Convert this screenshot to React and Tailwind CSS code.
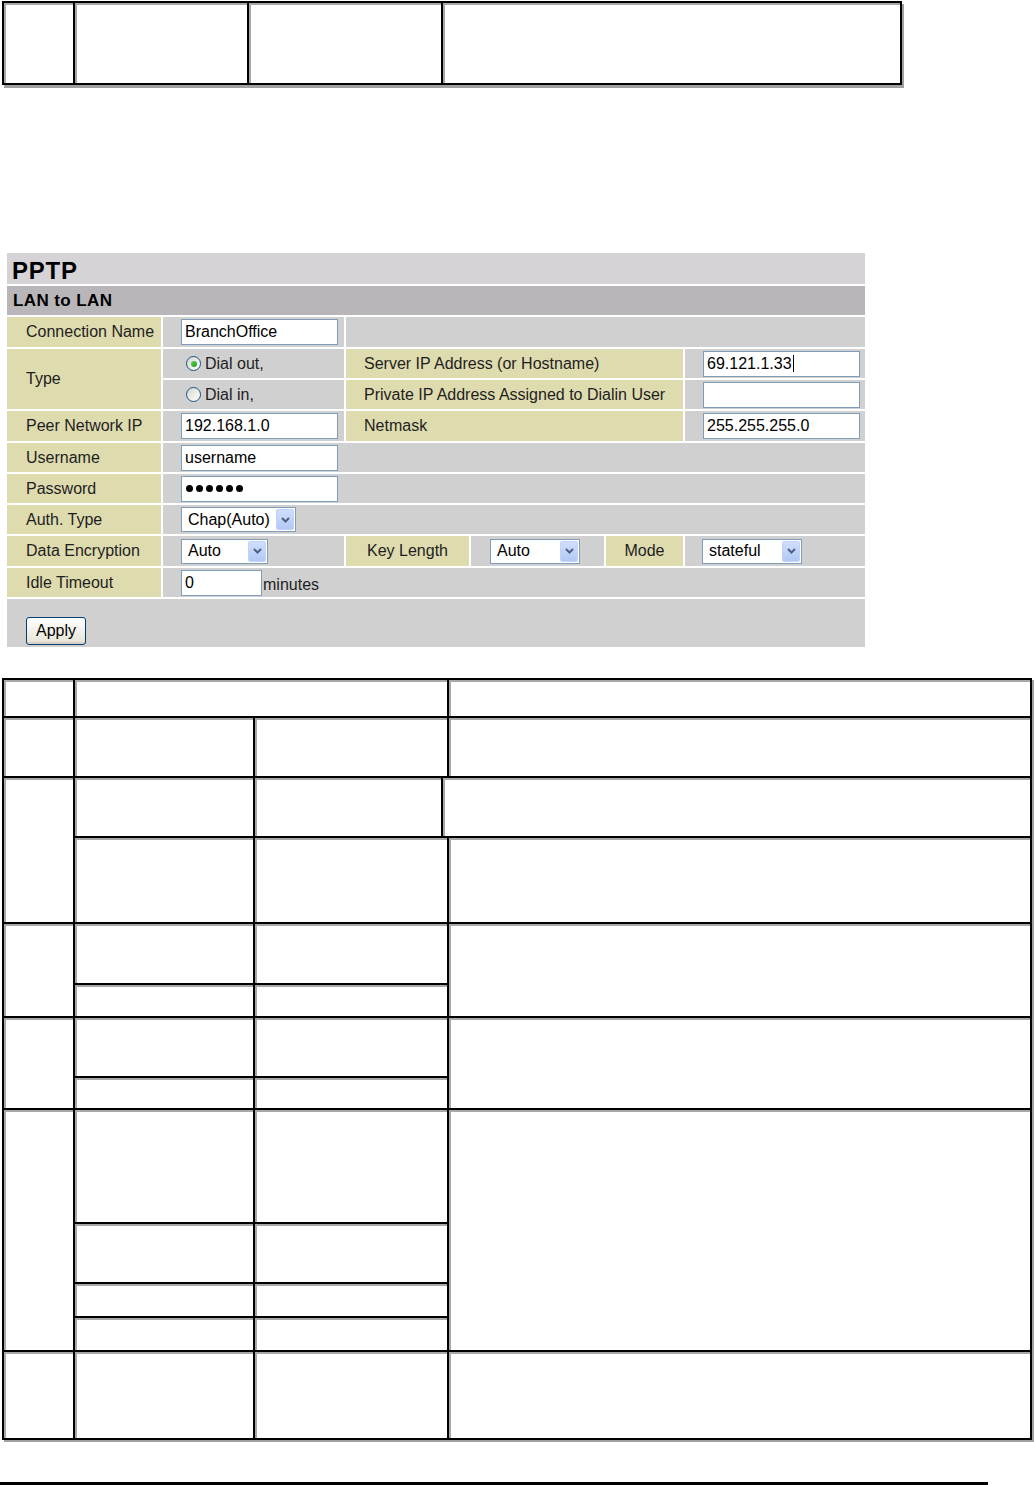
import React from "react";

const cell = "bg-white shadow-[inset_2px_2px_0_#a8a8a8]";

function TopTable() {
  return (
    <div className="ml-[2px] mt-[1px] grid w-[900px] grid-cols-[69px_172px_192px_457px] grid-rows-[80px] gap-[2px] bg-black p-[2px] shadow-[2px_3px_0_#a0a0a0]">
      <div className={cell} />
      <div className={cell} />
      <div className={cell} />
      <div className={cell} />
    </div>
  );
}

function BottomTable() {
  return (
    <div className="ml-[2px] mt-[31px] grid w-[1030px] grid-cols-[69px_178px_186px_4px_581px] grid-rows-[36px_58px_58px_84px_59px_31px_58px_30px_112px_58px_32px_32px_86px] gap-[2px] bg-black p-[2px] shadow-[2px_2px_0_#a0a0a0]">
      {/* row 1 */}
      <div className={`${cell} col-start-1 row-start-1`} />
      <div className={`${cell} col-start-2 col-span-3 row-start-1`} />
      <div className={`${cell} col-start-5 row-start-1`} />
      {/* row 2 */}
      <div className={`${cell} col-start-1 row-start-2`} />
      <div className={`${cell} col-start-2 row-start-2`} />
      <div className={`${cell} col-start-3 col-span-2 row-start-2`} />
      <div className={`${cell} col-start-5 row-start-2`} />
      {/* rows 3-4 */}
      <div className={`${cell} col-start-1 row-start-3 row-span-2`} />
      <div className={`${cell} col-start-2 row-start-3`} />
      <div className={`${cell} col-start-3 row-start-3`} />
      <div className={`${cell} col-start-4 col-span-2 row-start-3`} />
      <div className={`${cell} col-start-2 row-start-4`} />
      <div className={`${cell} col-start-3 col-span-2 row-start-4`} />
      <div className={`${cell} col-start-5 row-start-4`} />
      {/* rows 5-6 */}
      <div className={`${cell} col-start-1 row-start-5 row-span-2`} />
      <div className={`${cell} col-start-2 row-start-5`} />
      <div className={`${cell} col-start-3 col-span-2 row-start-5`} />
      <div className={`${cell} col-start-2 row-start-6`} />
      <div className={`${cell} col-start-3 col-span-2 row-start-6`} />
      <div className={`${cell} col-start-5 row-start-5 row-span-2`} />
      {/* rows 7-8 */}
      <div className={`${cell} col-start-1 row-start-7 row-span-2`} />
      <div className={`${cell} col-start-2 row-start-7`} />
      <div className={`${cell} col-start-3 col-span-2 row-start-7`} />
      <div className={`${cell} col-start-2 row-start-8`} />
      <div className={`${cell} col-start-3 col-span-2 row-start-8`} />
      <div className={`${cell} col-start-5 row-start-7 row-span-2`} />
      {/* rows 9-12 */}
      <div className={`${cell} col-start-1 row-start-9 row-span-4`} />
      <div className={`${cell} col-start-2 row-start-9`} />
      <div className={`${cell} col-start-3 col-span-2 row-start-9`} />
      <div className={`${cell} col-start-2 row-start-10`} />
      <div className={`${cell} col-start-3 col-span-2 row-start-10`} />
      <div className={`${cell} col-start-2 row-start-11`} />
      <div className={`${cell} col-start-3 col-span-2 row-start-11`} />
      <div className={`${cell} col-start-2 row-start-12`} />
      <div className={`${cell} col-start-3 col-span-2 row-start-12`} />
      <div className={`${cell} col-start-5 row-start-9 row-span-4`} />
      {/* row 13 */}
      <div className={`${cell} col-start-1 row-start-13`} />
      <div className={`${cell} col-start-2 row-start-13`} />
      <div className={`${cell} col-start-3 col-span-2 row-start-13`} />
      <div className={`${cell} col-start-5 row-start-13`} />
    </div>
  );
}

function Radio({ checked }) {
  return (
    <span className="flex h-[15px] w-[15px] items-center justify-center rounded-full border border-[#1c5180] bg-gradient-to-br from-[#d6d6cf] to-white">
      {checked && (
        <span className="h-[6px] w-[6px] rounded-full bg-gradient-to-br from-[#55d555] to-[#1e9a1e]" />
      )}
    </span>
  );
}

function Chevron() {
  return (
    <svg width="9" height="6" viewBox="0 0 9 6">
      <path d="M1 1 L4.5 4.5 L8 1" fill="none" stroke="#4d6185" strokeWidth="2" />
    </svg>
  );
}

function Select({ className, text }) {
  return (
    <div className={`flex h-[25px] items-center border border-[#7f9db9] bg-white pr-[1px] ${className}`}>
      <span className="pl-[6px] text-[16px] text-black">{text}</span>
      <span className="ml-auto flex h-[21px] w-[18px] items-center justify-center rounded-[2px] border border-[#c3d3f5] bg-gradient-to-b from-[#d0defb] to-[#b2c8f6]">
        <Chevron />
      </span>
    </div>
  );
}

function Input({ className, children }) {
  return (
    <div className={`flex h-[26px] items-center border border-[#7f9db9] bg-white pl-[3px] text-[16px] text-black ${className}`}>
      {children}
    </div>
  );
}

const label = "flex items-center bg-[#dedbaf] pl-[19px] text-[16px] text-[#1e1e1e]";
const labelR = "flex items-center bg-[#dedbaf] pl-[18px] text-[16px] text-[#1e1e1e]";
const val = "flex items-center bg-[#d0d0d0] pl-[18px]";

function Form() {
  return (
    <div className="ml-[7px] mt-[168px] grid w-[858px] grid-cols-[154px_181px_123px_133px_77px_180px] grid-rows-[31px_29px_30px_29px_29px_30px_29px_29px_29px_30px_29px_48px] gap-[2px] bg-white">
      <div className="col-span-6 flex items-center bg-[#d6d3d6] pl-[5px] pt-[4px] text-[24px] font-bold tracking-[0.8px] text-black">
        PPTP
      </div>
      <div className="col-span-6 flex items-center bg-[#b9b6b9] pl-[6px] text-[17px] font-bold tracking-[0.4px] text-black">
        LAN to LAN
      </div>

      <div className={label}>Connection Name</div>
      <div className={val}>
        <Input className="w-[157px]">BranchOffice</Input>
      </div>
      <div className="col-span-4 bg-[#d0d0d0]" />

      <div className={`${label} row-span-2`}>Type</div>
      <div className="flex items-center gap-[4px] bg-[#d0d0d0] pl-[23px] text-[16px] text-[#1e1e1e]">
        <Radio checked />
        <span>Dial out,</span>
      </div>
      <div className={`${labelR} col-span-3`}>Server IP Address (or Hostname)</div>
      <div className={val}>
        <Input className="w-[157px]">
          <span>69.121.1.33</span>
          <span className="ml-[1px] h-[17px] w-[1px] bg-black" />
        </Input>
      </div>

      <div className="flex items-center gap-[4px] bg-[#d0d0d0] pl-[23px] text-[16px] text-[#1e1e1e]">
        <Radio />
        <span>Dial in,</span>
      </div>
      <div className={`${labelR} col-span-3`}>Private IP Address Assigned to Dialin User</div>
      <div className={val}>
        <Input className="w-[157px]" />
      </div>

      <div className={label}>Peer Network IP</div>
      <div className={val}>
        <Input className="w-[157px]">192.168.1.0</Input>
      </div>
      <div className={`${labelR} col-span-3`}>Netmask</div>
      <div className={val}>
        <Input className="w-[157px]">255.255.255.0</Input>
      </div>

      <div className={label}>Username</div>
      <div className={`${val} col-span-5`}>
        <Input className="w-[157px]">username</Input>
      </div>

      <div className={label}>Password</div>
      <div className={`${val} col-span-5`}>
        <Input className="w-[157px] gap-[3px] pl-[4px]">
          <span className="h-[7px] w-[7px] rounded-full bg-black" />
          <span className="h-[7px] w-[7px] rounded-full bg-black" />
          <span className="h-[7px] w-[7px] rounded-full bg-black" />
          <span className="h-[7px] w-[7px] rounded-full bg-black" />
          <span className="h-[7px] w-[7px] rounded-full bg-black" />
          <span className="h-[7px] w-[7px] rounded-full bg-black" />
        </Input>
      </div>

      <div className={label}>Auth. Type</div>
      <div className={`${val} col-span-5`}>
        <Select className="w-[115px]" text="Chap(Auto)" />
      </div>

      <div className={label}>Data Encryption</div>
      <div className={val}>
        <Select className="w-[87px]" text="Auto" />
      </div>
      <div className="flex items-center justify-center bg-[#dedbaf] text-[16px] text-[#1e1e1e]">Key Length</div>
      <div className="flex items-center bg-[#d0d0d0] pl-[19px]">
        <Select className="w-[90px]" text="Auto" />
      </div>
      <div className="flex items-center justify-center bg-[#dedbaf] text-[16px] text-[#1e1e1e]">Mode</div>
      <div className="flex items-center bg-[#d0d0d0] pl-[17px]">
        <Select className="w-[100px]" text="stateful" />
      </div>

      <div className={label}>Idle Timeout</div>
      <div className={`${val} col-span-5`}>
        <Input className="w-[81px]">0</Input>
        <span className="mt-[5px] pl-[1px] text-[16px] text-[#1e1e1e]">minutes</span>
      </div>

      <div className="col-span-6 flex items-start bg-[#d0d0d0] pl-[19px] pt-[18px]">
        <button className="flex h-[28px] w-[60px] items-center justify-center rounded-[3px] border border-[#003c74] bg-gradient-to-b from-white to-[#e6e2d4] text-[16px] text-black shadow-[inset_0_-2px_0_#d8d2c2]">
          Apply
        </button>
      </div>
    </div>
  );
}

export default function App() {
  return (
    <div className="flex h-[1485px] w-[1034px] flex-col overflow-hidden bg-white font-['Liberation_Sans',Arial,sans-serif]">
      <TopTable />
      <Form />
      <BottomTable />
      <div className="mt-[42px] h-[3px] w-[988px] shrink-0 bg-black" />
    </div>
  );
}
